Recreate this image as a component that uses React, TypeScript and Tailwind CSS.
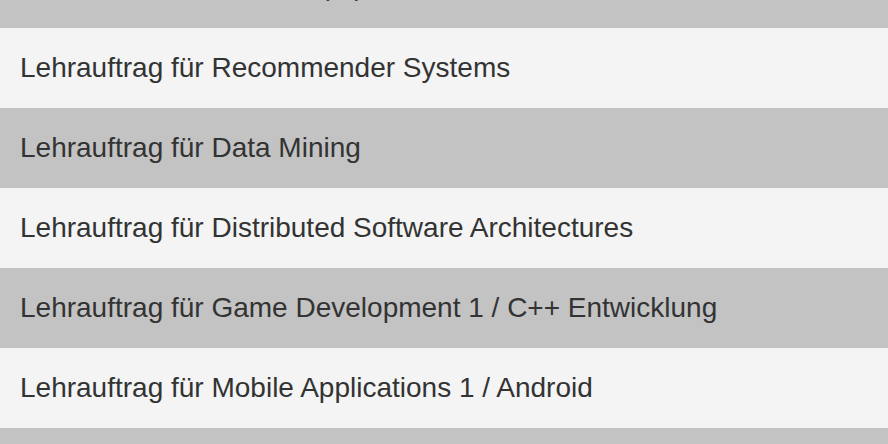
import React from "react";

const items = [
  "Lehrauftrag für Grundlagen der\nTheoretische Informatik (TI)",
  "Lehrauftrag für Recommender Systems",
  "Lehrauftrag für Data Mining",
  "Lehrauftrag für Distributed Software Architectures",
  "Lehrauftrag für Game Development 1 / C++ Entwicklung",
  "Lehrauftrag für Mobile Applications 1 / Android",
  "Lehrauftrag für Software Engineering",
];

const App = () => {
  return (
    <div className="w-[888px] h-[444px] overflow-hidden bg-[#f4f4f4] font-['Liberation_Sans',Arial,sans-serif]">
      {/* list is scrolled down a little, first row only peeks in */}
      <ul className="-mt-[86px]">
        {items.map((title, i) => (
          <li
            key={i}
            className={
              "px-5 pt-6 text-[28px] leading-8 text-[#333333] whitespace-pre-line " +
              (i === 0 ? "pb-[26px] " : "pb-6 ") +
              (i % 2 === 0 ? "bg-[#c3c3c3]" : "bg-[#f4f4f4]")
            }
          >
            {title}
          </li>
        ))}
      </ul>
    </div>
  );
};

export default App;
